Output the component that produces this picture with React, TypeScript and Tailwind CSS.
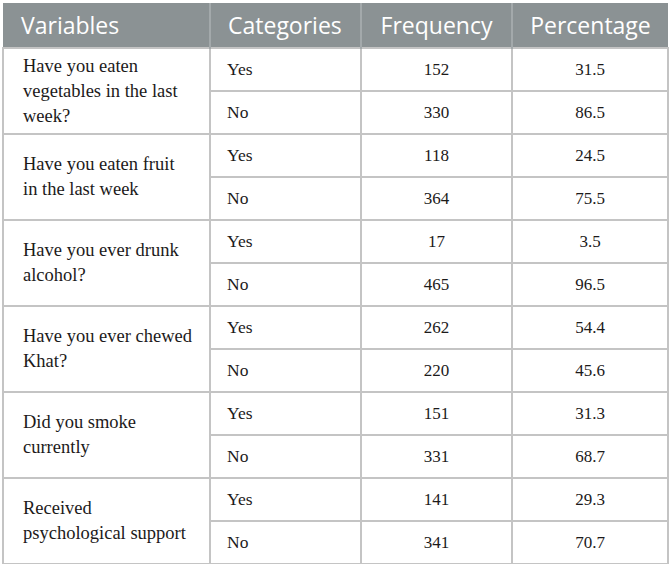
const groups = [
  {
    label: ['Have you eaten', 'vegetables in the last', 'week?'],
    rows: [
      ['Yes', '152', '31.5'],
      ['No', '330', '86.5'],
    ],
  },
  {
    label: ['Have you eaten fruit', 'in the last week'],
    rows: [
      ['Yes', '118', '24.5'],
      ['No', '364', '75.5'],
    ],
  },
  {
    label: ['Have you ever drunk', 'alcohol?'],
    rows: [
      ['Yes', '17', '3.5'],
      ['No', '465', '96.5'],
    ],
  },
  {
    label: ['Have you ever chewed', 'Khat?'],
    rows: [
      ['Yes', '262', '54.4'],
      ['No', '220', '45.6'],
    ],
  },
  {
    label: ['Did you smoke', 'currently'],
    rows: [
      ['Yes', '151', '31.3'],
      ['No', '331', '68.7'],
    ],
  },
  {
    label: ['Received', 'psychological support'],
    rows: [
      ['Yes', '141', '29.3'],
      ['No', '341', '70.7'],
    ],
  },
];

export default function App() {
  return (
    <div className="h-[564px] w-[670px] bg-white pl-[2px] pt-[3px]">
      <table className="w-[665px] table-fixed border-collapse text-[17px] text-[#1c1a1a] [font-family:'Liberation_Serif',serif]">
        <colgroup>
          <col className="w-[207px]" />
          <col className="w-[151px]" />
          <col className="w-[151px]" />
          <col className="w-[156px]" />
        </colgroup>
        <thead>
          <tr className="h-[45px] bg-[#8b9294] text-[23px] text-white [font-family:'Open_Sans',sans-serif]">
            <th className="border-r-2 border-[#a3a9ab] pl-[18px] text-left font-normal">Variables</th>
            <th className="border-r-2 border-[#a3a9ab] pl-[17px] text-left font-normal">Categories</th>
            <th className="border-r-2 border-[#a3a9ab] text-center font-normal">Frequency</th>
            <th className="text-center font-normal">Percentage</th>
          </tr>
        </thead>
        <tbody>
          {groups.map((g) =>
            g.rows.map((r, i) => (
              <tr key={g.label[0] + i} className="h-[43px]">
                {i === 0 && (
                  <td
                    rowSpan={2}
                    className="border-2 border-[#c4c4c4] pl-[19px] pr-2 align-middle text-[18.5px] leading-[25px]"
                  >
                    {g.label.map((line) => (
                      <div key={line}>{line}</div>
                    ))}
                  </td>
                )}
                <td className="border-2 border-[#c4c4c4] pl-[16px] text-[17.5px]">{r[0]}</td>
                <td className="border-2 border-[#c4c4c4] text-center">{r[1]}</td>
                <td className="border-2 border-[#c4c4c4] text-center">{r[2]}</td>
              </tr>
            )),
          )}
        </tbody>
      </table>
    </div>
  );
}
